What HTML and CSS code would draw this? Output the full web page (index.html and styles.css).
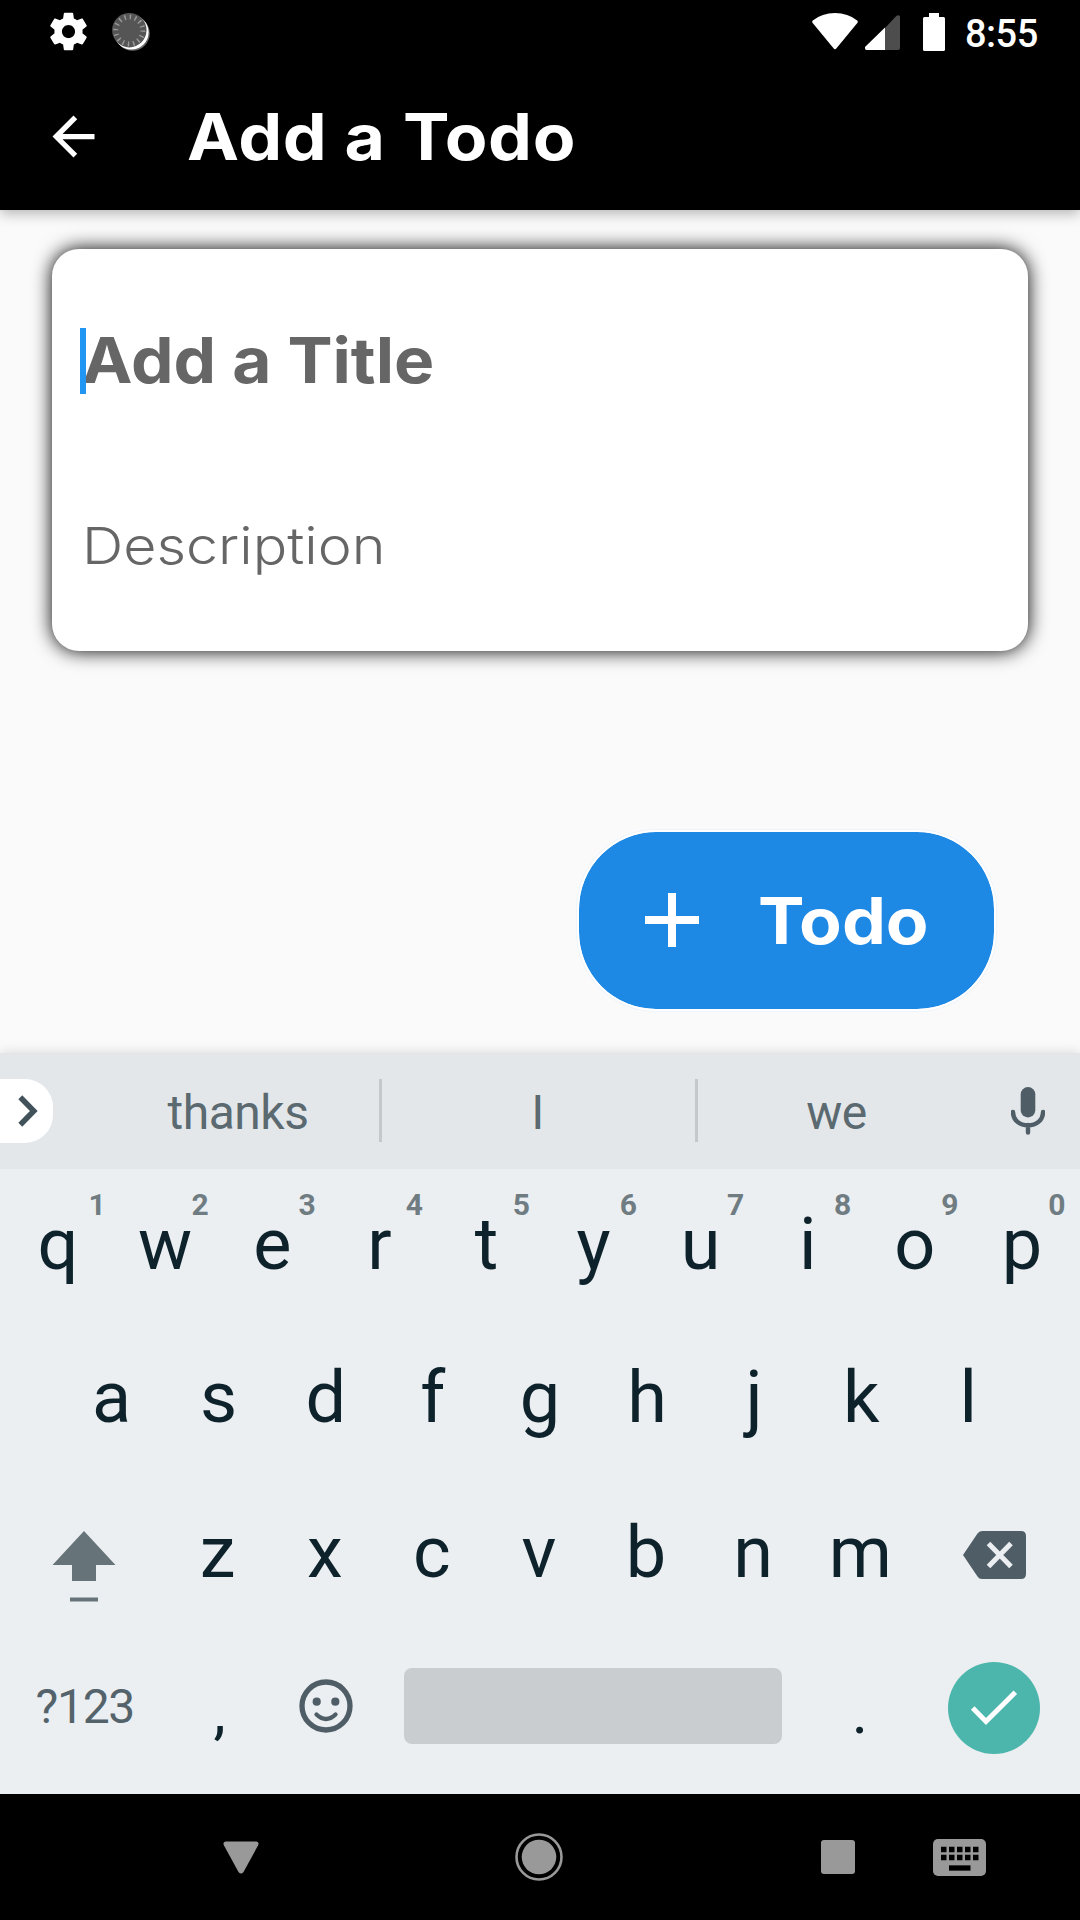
FILE: index.html
```html
<!DOCTYPE html>
<html lang="en">
<head>
<meta charset="utf-8">
<title>Add a Todo</title>
<link rel="stylesheet" href="styles.css">
</head>
<body>
<div class="screen">
  <header class="top">
    <div class="status-bar">
      <svg class="status-gear" width="45" height="45" viewBox="0 0 24 24"><path fill="#fff" d="M19.43 12.98c.04-.32.07-.64.07-.98s-.03-.66-.07-.98l2.11-1.65c.19-.15.24-.42.12-.64l-2-3.46c-.12-.22-.39-.3-.61-.22l-2.49 1c-.52-.4-1.08-.73-1.69-.98l-.38-2.65C14.46 2.18 14.25 2 14 2h-4c-.25 0-.46.18-.49.42l-.38 2.65c-.61.25-1.17.59-1.69.98l-2.49-1c-.23-.09-.49 0-.61.22l-2 3.46c-.13.22-.07.49.12.64l2.11 1.65c-.04.32-.07.65-.07.98s.03.66.07.98l-2.11 1.65c-.19.15-.24.42-.12.64l2 3.46c.12.22.39.3.61.22l2.49-1c.52.4 1.08.73 1.69.98l.38 2.65c.03.24.24.42.49.42h4c.25 0 .46-.18.49-.42l.38-2.65c.61-.25 1.17-.59 1.69-.98l2.49 1c.23.09.49 0 .61-.22l2-3.46c.12-.22.07-.49-.12-.64l-2.11-1.65zM12 15.5c-1.93 0-3.5-1.57-3.5-3.5s1.57-3.5 3.5-3.5 3.5 1.57 3.5 3.5-1.57 3.5-3.5 3.5z"/></svg>
      <svg class="status-sync" width="38" height="38" viewBox="0 0 38 38">
        <circle cx="20.5" cy="20.5" r="17.3" fill="#666"/>
        <circle cx="19.3" cy="19.3" r="17.300" fill="#fff"/>
        <circle cx="17.3" cy="17.2" r="17.2" fill="#555"/>
        <circle cx="17.3" cy="17.5" r="13.5" fill="none" stroke="#999" stroke-width="5" stroke-dasharray="1.4 3.9"/>
      </svg>
      <span class="spacer"></span>
      <svg class="status-wifi" width="46" height="37" viewBox="0 0 46 37"><path fill="#fff" d="M.8 7.500Q10 0 23 0t22.200 7.500q1 1 .3 2.300L24.500 35.300q-1.500 1.700-3 0L.5 9.800q-.7-1.300.3-2.300z"/></svg>
      <svg class="status-signal" width="35" height="35" viewBox="0 0 35 35"><path fill="#4d4d4d" d="M20 35V13L31.500.8Q35-1 35 2v31q0 2-2 2z"/><path fill="#fff" d="M20 12.500V35H1.500Q0 35 0 33v-1z"/></svg>
      <svg class="status-battery" width="22" height="38" viewBox="0 0 22 38"><path fill="#fff" d="M6 0h10v4h4.500Q22 4 22 5.500v31q0 1.500-1.500 1.500h-19Q0 38 0 36.500v-31Q0 4 1.500 4H6z"/></svg>
      <span class="clock">8:55</span>
    </div>
    <div class="app-bar">
      <svg class="back" width="63" height="63" viewBox="0 0 24 24"><path fill="#fff" d="M20 11H7.830l5.590-5.590L12 4l-8 8 8 8 1.410-1.410L7.830 13H20v-2z"/></svg>
      <h1 class="app-title">Add a Todo</h1>
    </div>
  </header>

  <main class="content">
    <section class="card">
      <div class="field field-title"><span class="caret"></span><span class="title-text">Add a Title</span></div>
      <div class="field field-description"><span class="description-text">Description</span></div>
    </section>
    <div class="add-button">
      <svg class="plus" width="54" height="54" viewBox="0 0 54 54"><path stroke="#fff" stroke-width="8" d="M27 0v54M0 27h54"/></svg>
      <span class="add-label">Todo</span>
    </div>
  </main>

  <section class="keyboard">
    <div class="suggestions">
      <div class="expand">
        <svg width="20" height="32" viewBox="0 0 20 32"><path d="M2.300 2.300L15.800 16 2.300 29.700" fill="none" stroke="#42525a" stroke-width="5.500"/></svg>
      </div>
      <span class="word word-first">thanks</span>
      <span class="divider"></span>
      <span class="word word-second">I</span>
      <span class="divider"></span>
      <span class="word word-third">we</span>
      <svg class="mic" width="34" height="48" viewBox="0 0 34 48"><rect x="9.700" y="0" width="14.600" height="30.500" rx="7.300" fill="#4f5e66"/><path d="M2 25c0 8.500 7 13.300 15 13.300S32 33.500 32 25M17 38v7.500" fill="none" stroke="#4f5e66" stroke-width="4.400" stroke-linecap="round"/></svg>
    </div>
    <div class="row row-1">
      <div class="key">q<span class="hint hint-narrow">1</span></div><div class="key">w<span class="hint">2</span></div><div class="key">e<span class="hint">3</span></div><div class="key">r<span class="hint">4</span></div><div class="key">t<span class="hint">5</span></div><div class="key">y<span class="hint">6</span></div><div class="key">u<span class="hint">7</span></div><div class="key">i<span class="hint">8</span></div><div class="key">o<span class="hint">9</span></div><div class="key">p<span class="hint">0</span></div>
    </div>
    <div class="row row-2">
      <div class="key">a</div><div class="key">s</div><div class="key">d</div><div class="key">f</div><div class="key">g</div><div class="key">h</div><div class="key">j</div><div class="key">k</div><div class="key">l</div>
    </div>
    <div class="row row-3">
      <div class="key key-wide"><svg class="shift" width="64" height="71" viewBox="0 0 64 71"><path fill="#667479" d="M32 0l31.500 34H44v16H20V34H.5zM18 66.500h28v4H18z"/></svg></div>
      <div class="key">z</div><div class="key">x</div><div class="key">c</div><div class="key">v</div><div class="key">b</div><div class="key">n</div><div class="key">m</div>
      <div class="key key-wide"><svg class="backspace" width="63" height="48" viewBox="0 0 63 48"><path fill="#4f5e66" d="M19 0h39q5 0 5 5v38q0 5-5 5H19q-3 0-4.500-2.500L0 24 14.500 2.500Q16 0 19 0z"/><path d="M25.500 12.500l22.500 23M48 12.500l-22.500 23" stroke="#eceff2" stroke-width="5"/></svg></div>
    </div>
    <div class="row row-4">
      <div class="key key-wide key-symbols">?123</div>
      <div class="key key-comma">,</div>
      <div class="key"><svg width="54" height="54" viewBox="0 0 54 54"><circle cx="27" cy="27" r="24" fill="none" stroke="#4f5e66" stroke-width="5.300"/><circle cx="17.700" cy="22.700" r="4.100" fill="#4f5e66"/><circle cx="36.300" cy="22.700" r="4.100" fill="#4f5e66"/><path d="M17.500 35.500q9.500 9 19 0" fill="none" stroke="#4f5e66" stroke-width="4.300" stroke-linecap="round"/></svg></div>
      <div class="space-bar"></div>
      <div class="key key-period">.</div>
      <div class="enter"><svg width="48" height="36" viewBox="0 0 48 36"><path d="M2.700 18L16 31.500 45.300 2.300" fill="none" stroke="#fff" stroke-width="5"/></svg></div>
    </div>
  </section>

  <nav class="nav-bar">
    <svg class="nav-back" width="36" height="33" viewBox="0 0 36 33"><path fill="#999" d="M2.500.5h31q3 .5 1.500 4L20.500 31q-2.500 3-5 0L1 4.500Q-.5 1 2.500.5z"/></svg>
    <svg class="nav-home" width="48" height="48" viewBox="0 0 48 48"><circle cx="24" cy="24" r="17.300" fill="#999"/><circle cx="24" cy="24" r="22.500" fill="none" stroke="#999" stroke-width="2.600"/></svg>
    <span class="nav-recent"></span>
    <svg class="nav-keyboard" width="53" height="37" viewBox="0 0 53 37"><rect width="53" height="37" rx="5" fill="#999"/><path d="M8 10.500h38M8 18.500h38" stroke="#000" stroke-width="5.300" stroke-dasharray="5.500 2.500"/><path d="M16 29h21.500" stroke="#000" stroke-width="5.300"/></svg>
  </nav>
</div>
</body>
</html>
```
FILE: styles.css
```css
* { box-sizing: border-box; }
body { margin: 0; background: #000; }
svg { display: block; flex: none; }

.screen {
  width: 1080px;
  height: 1920px;
  display: flex;
  flex-direction: column;
  overflow: hidden;
  font-family: Roboto, sans-serif;
}

/* Status bar and app bar */
.top {
  position: relative;
  z-index: 1;
  height: 210px;
  background: #000;
  color: #fff;
  box-shadow: 0 3px 13px rgba(0, 0, 0, .3);
}
.status-bar {
  height: 63px;
  padding: 0 43px 0 46px;
  display: flex;
  align-items: center;
}
.status-sync { margin-left: 21px; }
.spacer { flex: 1; }
.status-signal { margin: 2px 23px 0 7px; }
.clock {
  width: 72px;
  margin: 4px 0 0 20px;
  font-size: 38px;
  font-weight: 500;
  line-height: 44px;
  letter-spacing: -.5px;
  white-space: nowrap;
}
.app-bar {
  height: 147px;
  padding-left: 42px;
  display: flex;
  align-items: center;
}

/* Inter stretched slightly to a wider, geometric cut */
.app-title,
.title-text,
.description-text,
.add-label {
  transform-origin: left center;
  white-space: nowrap;
}
.app-title {
  margin: 0 0 0 82px;
  font: 700 64px/80px Inter, sans-serif;
  letter-spacing: .6px;
  transform: scaleX(1.09);
}

/* Form */
.content {
  height: 843px;
  padding: 39px 52px 0;
  background: #fafafa;
  display: flex;
  flex-direction: column;
}
.card {
  height: 402px;
  padding: 66px 28px 0;
  border-radius: 27px;
  background: #fff;
  box-shadow: 0 0 19px #000;
  color: #666;
  font-family: Inter, sans-serif;
}
.field { display: flex; align-items: center; }
.field-title {
  height: 90px;
  font-size: 63px;
  font-weight: 700;
}
.title-text {
  margin-left: -4px;
  transform: scaleX(1.073);
}
.caret {
  position: relative;
  z-index: 1;
  width: 6px;
  height: 66px;
  margin-top: 2px;
  background: #2196f3;
}
.field-description {
  height: 70px;
  margin-top: 105px;
  padding-left: 2px;
  font-size: 51px;
  font-weight: 300;
}
.description-text { transform: scaleX(1.124); }
.add-button {
  align-self: flex-end;
  width: 419px;
  height: 181px;
  margin: 179px 32px 0 0;
  padding-left: 66px;
  border: 2px solid #fff;
  border-radius: 79px;
  background: #1e88e5;
  background-clip: padding-box;
  box-shadow: 0 0 0 1px #edf4fb;
  display: flex;
  align-items: center;
  color: #fff;
}
.plus { margin-bottom: 1px; }
.add-label {
  margin: 0 0 0 59px;
  font: 700 64px/80px Inter, sans-serif;
  transform: scaleX(1.09);
}

/* Keyboard */
.keyboard {
  position: relative;
  height: 741px;
  background: #eceff2;
  box-shadow: 0 0 12px rgba(0, 0, 0, .14);
}
.suggestions {
  height: 116px;
  background: #e3e7ea;
  display: flex;
  align-items: center;
}
.expand {
  width: 53px;
  height: 64px;
  margin-bottom: 1px;
  padding-left: 18px;
  border-radius: 0 28px 28px 0;
  background: #fff;
  display: flex;
  align-items: center;
}
.word {
  color: #5b6970;
  font-size: 48px;
  line-height: 56px;
  letter-spacing: -.5px;
  margin-top: 4px;
  text-align: center;
}
.word-first { width: 284px; margin-left: 42px; padding-left: 2px; }
.word-second { width: 313px; padding-right: 2px; }
.word-third { width: 277px; }
.divider { width: 3px; height: 63px; margin-bottom: 1px; background: #c4c8cb; }
.mic { margin-left: 36px; }

.row {
  display: flex;
  align-items: center;
  color: #0d222b;
  font-size: 72px;
  line-height: 84px;
}
.row-1 { height: 151px; padding: 0 4.500px; }
.row-2 { height: 156px; padding: 0 58px; }
.row-3 { height: 154px; padding: 0 3.500px; }
.row-4 { height: 152px; padding: 0 4.500px; }
.key {
  position: relative;
  width: 107.100px;
  flex: none;
  display: flex;
  justify-content: center;
}
.key-wide { width: 160.600px; }
.hint {
  position: absolute;
  top: -16px;
  right: 10px;
  color: #6f7c82;
  font-size: 30px;
  font-weight: 700;
  line-height: 36px;
}
.hint-narrow { right: 6px; }
.shift { margin: 26px 0 0 1px; }
.backspace { margin-top: 4px; }
.key-symbols { color: #54636b; font-size: 48px; letter-spacing: -1.300px; margin-top: 2px; }
.key-comma, .key-period { font-size: 62px; margin-top: 11px; }
.key-comma { padding-left: 2px; }
.space-bar {
  width: 378px;
  height: 76px;
  margin-left: 24.600px;
  margin-right: 24.600px;
  border-radius: 8px;
  background: #c9cdd0;
}
.enter {
  width: 92px;
  height: 92px;
  margin: 4px 0 0 34.500px;
  border-radius: 50%;
  background: #4db6ac;
  display: flex;
  align-items: center;
  justify-content: center;
}

/* System navigation */
.nav-bar {
  height: 126px;
  background: #000;
  display: flex;
  align-items: center;
}
.nav-back { margin-left: 223px; }
.nav-home { margin: 0 258px 0 256px; }
.nav-recent {
  width: 34px;
  height: 34px;
  border-radius: 3px;
  background: #999;
}
.nav-keyboard { margin-left: 78px; }
```
